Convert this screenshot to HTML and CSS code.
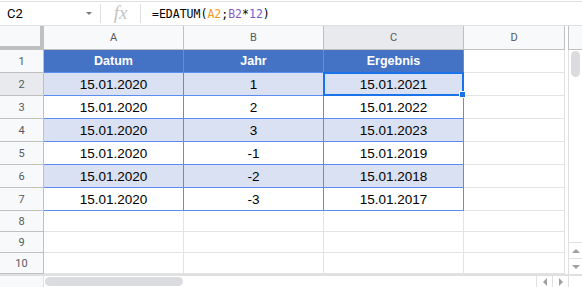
FILE: index.html
```html
<!DOCTYPE html>
<html lang="de">
<head>
  <meta charset="UTF-8">
  <title>EDATUM</title>
  <link rel="stylesheet" href="styles.css">
</head>
<body>
<div class="formula-bar">
  <div class="name-box"><span>C2</span><span class="caret"></span></div>
  <div class="fx">fx</div>
  <div class="formula">=EDATUM(<span class="ref-a">A2</span>;<span class="ref-b">B2</span>*<span class="num">12</span>)</div>
</div>

<div class="main">
  <div class="grid">
    <div class="corner"></div>
    <div class="col-head">A</div>
    <div class="col-head">B</div>
    <div class="col-head selected">C</div>
    <div class="col-head">D</div>

    <div class="row-head">1</div>
    <div class="cell t th">Datum</div>
    <div class="cell t th">Jahr</div>
    <div class="cell t th">Ergebnis</div>
    <div class="cell"></div>

    <div class="row-head selected">2</div>
    <div class="cell t band">15.01.2020</div>
    <div class="cell t band">1</div>
    <div class="cell t band active">15.01.2021<span class="handle"></span></div>
    <div class="cell"></div>

    <div class="row-head">3</div>
    <div class="cell t">15.01.2020</div>
    <div class="cell t">2</div>
    <div class="cell t">15.01.2022</div>
    <div class="cell"></div>

    <div class="row-head">4</div>
    <div class="cell t band">15.01.2020</div>
    <div class="cell t band">3</div>
    <div class="cell t band">15.01.2023</div>
    <div class="cell"></div>

    <div class="row-head">5</div>
    <div class="cell t">15.01.2020</div>
    <div class="cell t">-1</div>
    <div class="cell t">15.01.2019</div>
    <div class="cell"></div>

    <div class="row-head">6</div>
    <div class="cell t band">15.01.2020</div>
    <div class="cell t band">-2</div>
    <div class="cell t band">15.01.2018</div>
    <div class="cell"></div>

    <div class="row-head">7</div>
    <div class="cell t">15.01.2020</div>
    <div class="cell t">-3</div>
    <div class="cell t">15.01.2017</div>
    <div class="cell"></div>

    <div class="row-head">8</div>
    <div class="cell"></div>
    <div class="cell"></div>
    <div class="cell"></div>
    <div class="cell"></div>

    <div class="row-head">9</div>
    <div class="cell"></div>
    <div class="cell"></div>
    <div class="cell"></div>
    <div class="cell"></div>

    <div class="row-head">10</div>
    <div class="cell"></div>
    <div class="cell"></div>
    <div class="cell"></div>
    <div class="cell"></div>
  </div>

  <div class="vbar">
    <div class="vbar-head"></div>
    <div class="vbar-track"><div class="vthumb"></div></div>
    <div class="vbtn"><span class="arrow up"></span></div>
    <div class="vbtn"><span class="arrow down"></span></div>
  </div>
</div>

<div class="hbar">
  <div class="hbar-stub"></div>
  <div class="hbar-track"><div class="hthumb"></div></div>
  <div class="hbtn"><span class="arrow left"></span></div>
  <div class="hbtn"><span class="arrow right"></span></div>
  <div class="hbar-corner"></div>
</div>
</body>
</html>
```

FILE: styles.css
```css
* {
  box-sizing: border-box;
}

body {
  margin: 0;
  width: 582px;
  height: 287px;
  overflow: hidden;
  background: #fff;
  font-family: Roboto, 'Liberation Sans', sans-serif;
}

/* formula bar */
.formula-bar {
  display: flex;
  align-items: center;
  height: 25px;
  margin-top: 1px;
  border-top: 1px solid #e0e0e0;
  border-bottom: 1px solid #e0e0e0;
}

.name-box {
  display: flex;
  align-items: center;
  justify-content: space-between;
  width: 101px;
  height: 19px;
  padding: 0 7px 0 7px;
  border-right: 1px solid #e0e0e0;
  font-size: 13px;
  color: #000;
}

.caret {
  width: 0;
  height: 0;
  border-left: 3px solid transparent;
  border-right: 3px solid transparent;
  border-top: 3px solid #7c7c7c;
  margin-right: 1px;
}

.fx {
  width: 40px;
  height: 19px;
  border-right: 1px solid #e0e0e0;
  text-align: center;
  font-family: 'Liberation Serif', serif;
  font-style: italic;
  font-size: 19px;
  line-height: 17px;
  color: #c4c4c4;
}

.formula {
  padding-left: 11px;
  font-family: 'DejaVu Sans Mono', monospace;
  font-size: 11.5px;
  color: #000;
}

.ref-a { color: #f7981d; }
.ref-b { color: #8e5bc6; }
.num { color: #6b5fd0; }

/* sheet */
.main {
  display: flex;
  height: 248px;
}

.grid {
  display: grid;
  grid-template-columns: 44px 140px 140px 140px 101px;
  grid-template-rows: 24px repeat(7, 23px) repeat(3, 21px);
  width: 565px;
}

.corner {
  background: #f8f9fa;
  border-right: 4px solid #c0c0c0;
  border-bottom: 4px solid #c0c0c0;
}

.col-head,
.row-head {
  display: flex;
  align-items: center;
  justify-content: center;
  background: #f8f9fa;
  border-right: 1px solid #c0c0c0;
  border-bottom: 1px solid #c0c0c0;
  font-size: 11px;
  color: #555a60;
}

.col-head.selected,
.row-head.selected {
  background: #e8eaed;
}

.cell {
  display: flex;
  align-items: center;
  justify-content: center;
  border-right: 1px solid #e2e3e3;
  border-bottom: 1px solid #e2e3e3;
  font-family: 'Liberation Sans', Arial, sans-serif;
  font-size: 13.5px;
  color: #000;
}

.cell.t {
  border-color: #5b8def;
}

.cell.th {
  background: #4472c4;
  color: #fff;
  font-weight: bold;
  font-size: 12.5px;
}

.cell.band {
  background: #d9e1f2;
}

.cell.active {
  position: relative;
}

.cell.active::after {
  content: '';
  position: absolute;
  top: -1px;
  left: -1px;
  right: -1px;
  bottom: -1px;
  border: 2px solid #1a73e8;
}

.handle {
  position: absolute;
  right: -3px;
  bottom: -3px;
  width: 7px;
  height: 7px;
  background: #1a73e8;
  border: 1px solid #fff;
  z-index: 2;
}

/* scrollbars */
.vbar {
  display: flex;
  flex-direction: column;
  width: 17px;
  padding-left: 3px;
}

.vbar-head {
  height: 24px;
  background: #f8f9fa;
  border-left: 1px solid #c0c0c0;
  border-bottom: 1px solid #c0c0c0;
}

.vbar-track {
  flex: 1;
  border-left: 1px solid #e0e0e0;
  padding: 1px 3px 0 2px;
}

.vthumb {
  width: 9px;
  height: 26px;
  border-radius: 5px;
  background: #dadce0;
}

.vbtn {
  display: flex;
  align-items: center;
  justify-content: center;
  height: 16px;
  border-left: 1px solid #e0e0e0;
  border-top: 1px solid #e0e0e0;
}

.hbar {
  display: flex;
  height: 13px;
  border-top: 2px solid #e0e0e0;
}

.hbar-stub {
  width: 44px;
  background: #f8f9fa;
  border-right: 1px solid #e0e0e0;
}

.hbar-track {
  flex: 1;
  padding: 1px 0 0 1px;
}

.hthumb {
  width: 138px;
  height: 9px;
  border-radius: 5px;
  background: #dadce0;
}

.hbtn {
  display: flex;
  align-items: center;
  justify-content: center;
  width: 16px;
  border-left: 1px solid #e0e0e0;
}

.hbar-corner {
  width: 14px;
  border-left: 1px solid #e0e0e0;
}

.arrow {
  width: 0;
  height: 0;
}

.arrow.up {
  border-left: 4px solid transparent;
  border-right: 4px solid transparent;
  border-bottom: 4px solid #a0a0a0;
}

.arrow.down {
  border-left: 4px solid transparent;
  border-right: 4px solid transparent;
  border-top: 4px solid #a0a0a0;
}

.arrow.left {
  border-top: 4px solid transparent;
  border-bottom: 4px solid transparent;
  border-right: 4px solid #a0a0a0;
}

.arrow.right {
  border-top: 4px solid transparent;
  border-bottom: 4px solid transparent;
  border-left: 4px solid #a0a0a0;
}
```
